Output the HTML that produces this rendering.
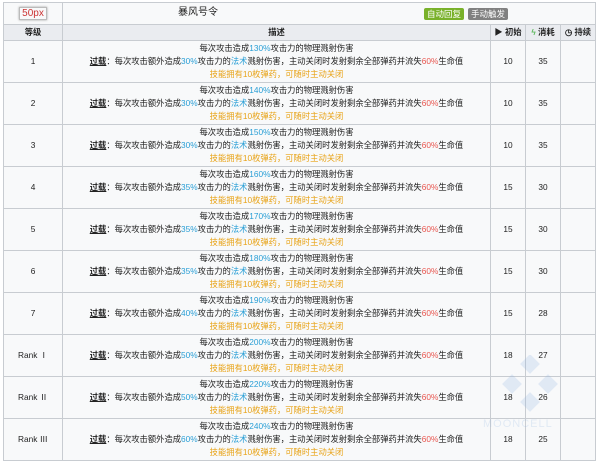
<!DOCTYPE html>
<html><head><meta charset="utf-8"><style>
body{margin:0;width:600px;height:467px;background:#fff;font-family:"Liberation Sans","Noto Sans CJK SC",sans-serif;color:#222;overflow:hidden;position:relative}
table{position:absolute;left:3px;top:2px;width:592px;border-collapse:collapse;background:#f8f9fa;table-layout:fixed}
td,th{border:1px solid #c8ccd1;text-align:center;padding:0;font-size:8.3px;line-height:13px;overflow:hidden}
th{background:#eaecf0;font-weight:bold;height:15px}
tr.r td{height:41px}
.b{color:#2a9fd6}.r1{color:#e8554e}.o{color:#e8a317}
u{font-weight:bold}
.tag{position:absolute;top:5px;color:#fff;font-size:8.5px;line-height:12px;padding:0 3px;border-radius:2px}
</style></head><body>
<table>
<col style="width:59px"><col style="width:428px"><col style="width:35px"><col style="width:35px"><col style="width:35px">
<tr><td style="height:21px;font-size:10px"><span style="border:1px solid #bbb;padding:0 2px;color:#c33;box-shadow:0 0 2px #999">50px</span></td><td colspan="4" style="font-size:10px;position:relative"><span style="position:absolute;left:115px;top:3px">暴风号令</span><span class="tag" style="left:361px;background:#79b12a">自动回复</span><span class="tag" style="left:405px;background:#808080">手动触发</span></td></tr>
<tr><th>等级</th><th>描述</th><th>▶ 初始</th><th><span style="color:#5cb85c">ϟ</span> 消耗</th><th>◷ 持续</th></tr>
<tr class="r"><td>1</td><td>每次攻击造成<span class="b">130%</span>攻击力的物理溅射伤害<br><u>过载</u>：每次攻击额外造成<span class="b">30%</span>攻击力的<span class="b">法术</span>溅射伤害，主动关闭时发射剩余全部弹药并流失<span class="r1">60%</span>生命值<br><span class="o">技能拥有10枚弹药，可随时主动关闭</span></td><td>10</td><td>35</td><td></td></tr>
<tr class="r"><td>2</td><td>每次攻击造成<span class="b">140%</span>攻击力的物理溅射伤害<br><u>过载</u>：每次攻击额外造成<span class="b">30%</span>攻击力的<span class="b">法术</span>溅射伤害，主动关闭时发射剩余全部弹药并流失<span class="r1">60%</span>生命值<br><span class="o">技能拥有10枚弹药，可随时主动关闭</span></td><td>10</td><td>35</td><td></td></tr>
<tr class="r"><td>3</td><td>每次攻击造成<span class="b">150%</span>攻击力的物理溅射伤害<br><u>过载</u>：每次攻击额外造成<span class="b">30%</span>攻击力的<span class="b">法术</span>溅射伤害，主动关闭时发射剩余全部弹药并流失<span class="r1">60%</span>生命值<br><span class="o">技能拥有10枚弹药，可随时主动关闭</span></td><td>10</td><td>35</td><td></td></tr>
<tr class="r"><td>4</td><td>每次攻击造成<span class="b">160%</span>攻击力的物理溅射伤害<br><u>过载</u>：每次攻击额外造成<span class="b">35%</span>攻击力的<span class="b">法术</span>溅射伤害，主动关闭时发射剩余全部弹药并流失<span class="r1">60%</span>生命值<br><span class="o">技能拥有10枚弹药，可随时主动关闭</span></td><td>15</td><td>30</td><td></td></tr>
<tr class="r"><td>5</td><td>每次攻击造成<span class="b">170%</span>攻击力的物理溅射伤害<br><u>过载</u>：每次攻击额外造成<span class="b">35%</span>攻击力的<span class="b">法术</span>溅射伤害，主动关闭时发射剩余全部弹药并流失<span class="r1">60%</span>生命值<br><span class="o">技能拥有10枚弹药，可随时主动关闭</span></td><td>15</td><td>30</td><td></td></tr>
<tr class="r"><td>6</td><td>每次攻击造成<span class="b">180%</span>攻击力的物理溅射伤害<br><u>过载</u>：每次攻击额外造成<span class="b">35%</span>攻击力的<span class="b">法术</span>溅射伤害，主动关闭时发射剩余全部弹药并流失<span class="r1">60%</span>生命值<br><span class="o">技能拥有10枚弹药，可随时主动关闭</span></td><td>15</td><td>30</td><td></td></tr>
<tr class="r"><td>7</td><td>每次攻击造成<span class="b">190%</span>攻击力的物理溅射伤害<br><u>过载</u>：每次攻击额外造成<span class="b">40%</span>攻击力的<span class="b">法术</span>溅射伤害，主动关闭时发射剩余全部弹药并流失<span class="r1">60%</span>生命值<br><span class="o">技能拥有10枚弹药，可随时主动关闭</span></td><td>15</td><td>28</td><td></td></tr>
<tr class="r"><td>Rank Ⅰ</td><td>每次攻击造成<span class="b">200%</span>攻击力的物理溅射伤害<br><u>过载</u>：每次攻击额外造成<span class="b">50%</span>攻击力的<span class="b">法术</span>溅射伤害，主动关闭时发射剩余全部弹药并流失<span class="r1">60%</span>生命值<br><span class="o">技能拥有10枚弹药，可随时主动关闭</span></td><td>18</td><td>27</td><td></td></tr>
<tr class="r"><td>Rank Ⅱ</td><td>每次攻击造成<span class="b">220%</span>攻击力的物理溅射伤害<br><u>过载</u>：每次攻击额外造成<span class="b">50%</span>攻击力的<span class="b">法术</span>溅射伤害，主动关闭时发射剩余全部弹药并流失<span class="r1">60%</span>生命值<br><span class="o">技能拥有10枚弹药，可随时主动关闭</span></td><td>18</td><td>26</td><td></td></tr>
<tr class="r"><td>Rank Ⅲ</td><td>每次攻击造成<span class="b">240%</span>攻击力的物理溅射伤害<br><u>过载</u>：每次攻击额外造成<span class="b">60%</span>攻击力的<span class="b">法术</span>溅射伤害，主动关闭时发射剩余全部弹药并流失<span class="r1">60%</span>生命值<br><span class="o">技能拥有10枚弹药，可随时主动关闭</span></td><td>18</td><td>25</td><td></td></tr>
</table>
<div style="position:absolute;left:483px;top:355px;opacity:.22;color:#8fb3e0;font-size:11px;letter-spacing:1px">
<svg width="70" height="60" style="margin-left:12px"><g fill="#8fb3e0"><rect x="28" y="2" width="14" height="14" transform="rotate(45 35 9)"/><rect x="10" y="22" width="14" height="14" transform="rotate(45 17 29)"/><rect x="46" y="22" width="14" height="14" transform="rotate(45 53 29)"/><rect x="28" y="40" width="14" height="14" transform="rotate(45 35 47)"/></g></svg><div>MOONCELL</div></div>
</body></html>
